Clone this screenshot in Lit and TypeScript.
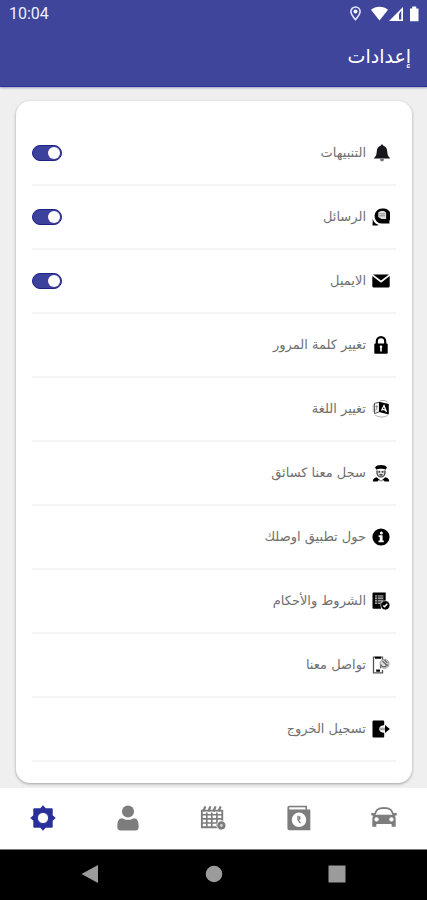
import { LitElement, html, svg, css } from "lit";
import { customElement, property, state } from "lit/decorators.js";

const icons: Record<string, unknown> = {
  bell: svg`<path d="M10 .5a1.300 1.300 0 0 0-1.300 1.300C6 2.500 5 4.500 4.800 7 4.600 10.500 4.200 12 2.200 13.700v.9h15.600v-.9c-2-1.700-2.400-3.200-2.600-6.700C15 4.500 14 2.500 11.300 1.800A1.300 1.300 0 0 0 10 .5z" fill="#17181b"/><path d="M8 15h4a2 2.500 0 0 1-4 0z" fill="#777"/>`,
  chat: svg`<path d="M10 .6a7.500 7.500 0 1 0 0 15h7.400v-3A7.500 7.500 0 0 0 10 .6z"/><path d="M6.300 4.600a5 5 0 0 1 7.800 0V11H9.500l-3.200-2z" fill="#ddd"/><path d="M7.500 5.800H13M7.500 7.800H13" stroke="#888" stroke-width="1"/><path d="M.8 9c0 3.500 1 6 6 8l-1.500.4H.5z"/><path d="M1.800 10c1 4 3.500 6 7.200 6.600" fill="none" stroke="#fff" stroke-width=".9"/>`,
  mail: svg`<path d="M1 2.500h16L9 8.600z"/><path d="M.3 4 9 10.700 17.700 4v10a1.500 1.500 0 0 1-1.500 1.500H1.800A1.500 1.500 0 0 1 .3 14z"/>`,
  lock: svg`<path d="M4.800 8V5.300a4.200 4.200 0 0 1 8.400 0V8" fill="none" stroke="#000" stroke-width="2.200"/><rect x="2.300" y="7.500" width="13.400" height="10.200" rx="1"/><path d="M9 10.500v5" stroke="#fff" stroke-width="1.600"/><circle cx="9" cy="10.800" r="1.300" fill="#fff"/>`,
  language: svg`<path d="M7 1.800 16.800 4v10.500L7 12z"/><path d="m9.500 10.500 2.500-5L14.500 12M10.500 9.300l3 .8" fill="none" stroke="#fff" stroke-width="1.300"/><path d="M7 2.300 2.500 3.300v10.200L7 12" fill="#eee" stroke="#444" stroke-width=".9"/><path d="M3.500 6.500h2.500M4.700 5.500v3l-1 2" fill="none" stroke="#777" stroke-width=".8"/><path d="M8 1c3-1 5.500-.7 7.500 1M3 14.800c3 2.700 9 2.900 12.500.6M1.200 4v8" fill="none" stroke="#999" stroke-width=".8"/>`,
  driver: svg`<path d="M3 3.500C4.500.2 13.500.2 15 3.500l-1.500 2.300C11.500 4.500 6.500 4.500 4.500 5.800z"/><path d="M5 6.500v2a4 4.500 0 0 0 8 0v-2" fill="#ddd" stroke="#333" stroke-width="1.200"/><path d="M6.500 7.800h1.700M9.800 7.800h1.700M7.500 10.800h3" stroke="#111" stroke-width="1.200"/><path d="M.8 17.500c0-2.600 1.300-3.500 4-4.200L9 17l4.200-3.700c2.700.7 4 1.600 4 4.200h-4.400L11 16l-2 1.500L7 16l-1.800 1.500z"/>`,
  info: svg`<circle cx="9" cy="9" r="8.600"/><circle cx="9.400" cy="4.900" r="1.500" fill="#fff"/><path d="M6.600 7.200h4v5.300h1.200v1.800H6.500v-1.800h1.300V9H6.600z" fill="#fff"/>`,
  terms: svg`<path d="M1.500.6h12.200v8.600L9 12v4.700H1.500a1 1 0 0 1-1-1V1.600a1 1 0 0 1 1-1z"/><path d="M3 3.300h8.300v6L8 12H3z" fill="#999"/><path d="M3 5h8M3 7.500h8M3 10h6M5.500 3v9" stroke="#222" stroke-width=".9"/><circle cx="13.300" cy="13.300" r="4.600" stroke="#fff" stroke-width=".6"/><path d="m11.300 13.500 1.300 1.200 2.700-2.900" fill="none" stroke="#fff" stroke-width="1.500"/>`,
  contact: svg`<path d="M10.500 4V1.200H1.500v15.600h9V14" fill="none" stroke="#555" stroke-width="1.300"/><path d="M3 .8h6v1.900H3zM4.200 15.800h3.800v-2.300H4.200z"/><circle cx="12.500" cy="7.800" r="4.500" fill="#ddd" stroke="#888" stroke-width=".8"/><path d="M8.500 12.300 9 9c2 2.600 4 2.500 7-.5M10.500 5l4 4M12.500 4l3 3" fill="none" stroke="#666" stroke-width="1.200"/>`,
  logout: svg`<path d="M1.500.6h9.700a1 1 0 0 1 1 1v3.700c-3 0-5 1.500-5 3.700s2 3.700 5 3.700v3.700a1 1 0 0 1-1 1H1.500a1 1 0 0 1-1-1V1.600a1 1 0 0 1 1-1z"/><path d="M7.800 9H13" stroke="#aaa" stroke-width="2.800"/><path d="M13 5 17.800 9 13 13z"/>`,
};

const tabIcons: Record<string, unknown> = {
  car: svg`<path d="M4 10.500C5.500 5.500 7 3.200 14 3.200S22.500 5.500 24 10.500" fill="none" stroke="currentColor" stroke-width="2"/><path d="M.3 8.500h3.500l.6 2h19.200l.6-2h3.500V11l-2 .5c.8 1.600.9 3 .9 5.300v6.700h-4.400V20.500H5.800v3H1.400v-6.700c0-2.300.1-3.700.9-5.300l-2-.5z"/><circle cx="6" cy="15.500" r="2.300" fill="#fff"/><circle cx="22" cy="15.500" r="2.300" fill="#fff"/>`,
  book: svg`<path d="M1.500 3A2.200 2.200 0 0 1 3.700.8h19v4h3.500v22.400H3.700A2.200 2.200 0 0 1 1.500 25z"/><path d="M3.500 2.500h17.500v2.300H3.500z" fill="#fff"/><circle cx="14" cy="16" r="7.800" fill="#fff"/><path d="M13 11.500v4.500l2.500 3.500M14.700 12v4" fill="none" stroke="currentColor" stroke-width="1.500"/>`,
  calendar: svg`<path d="M2 6h22v18H2z" fill="#fff" stroke="currentColor" stroke-width="2"/><path d="M2 10.500H24M2 15H24M2 19.400H24M7.300 8v16M12.700 8v16M18.200 8v16" fill="none" stroke="currentColor" stroke-width="1.800"/><path d="M3.500 7l2.200-5.500M9 7l2.200-5.500M14.500 7l2.200-5.500M20 7l2.200-5.500" stroke="currentColor" stroke-width="2.400"/><circle cx="23" cy="22" r="5" stroke="#fff"/><circle cx="23" cy="22" r="1.600" fill="#ccc"/>`,
  person: svg`<circle cx="14" cy="7" r="6.500"/><path d="M2.500 23c0-5 1.300-8.700 5.200-8.700 4 2.200 8.600 2.200 12.600 0 3.900 0 5.200 3.700 5.200 8.700 0 3.200-1 4.500-3.500 4.500H6C3.500 27.500 2.500 26.200 2.500 23z"/>`,
  gear: svg`<path fill-rule="evenodd" d="M14 .8l3 3.300h6.900V11l3.300 3-3.300 3v6.900H17l-3 3.300-3-3.300H4.100V17L.8 14l3.300-3V4.100H11zM14 8a6 6 0 1 0 0 12 6 6 0 0 0 0-12z" stroke="currentColor" stroke-linejoin="round"/>`,
};

interface Item {
  icon: string;
  label: string;
  toggle?: boolean;
}

const items: Item[] = [
  { icon: "bell", label: "التنبيهات", toggle: true },
  { icon: "chat", label: "الرسائل", toggle: true },
  { icon: "mail", label: "الايميل", toggle: true },
  { icon: "lock", label: "تغيير كلمة المرور" },
  { icon: "language", label: "تغيير اللغة" },
  { icon: "driver", label: "سجل معنا كسائق" },
  { icon: "info", label: "حول تطبيق اوصلك" },
  { icon: "terms", label: "الشروط والأحكام" },
  { icon: "contact", label: "تواصل معنا" },
  { icon: "logout", label: "تسجيل الخروج" },
];

const tabs = [
  { id: "car", label: "الرحلات" },
  { id: "book", label: "السجل" },
  { id: "calendar", label: "الحجوزات" },
  { id: "person", label: "الحساب" },
  { id: "gear", label: "إعدادات" },
];

@customElement("setting-row")
class SettingRow extends LitElement {
  @property({ attribute: false }) item!: Item;

  static styles = css`
    :host { display: block; }
    .row {
      display: flex; align-items: center; gap: 6px;
      box-sizing: border-box; width: 100%; height: 64px; padding: 0 6px 0 0;
      border: 0; border-bottom: 2px solid #f4f4f4; background: none;
      font: inherit; color: inherit; text-align: right; cursor: pointer;
    }
    .icon { width: 18px; height: 18px; flex: none; }
    .label { flex: 1; }
    .switch {
      appearance: none; display: flex; align-items: center; flex: none;
      box-sizing: border-box; width: 30px; height: 16px; margin: 0; padding: 0 1px;
      border-radius: 8px; background: #3c429c; border: 1px solid #20208c; cursor: pointer;
    }
    .switch::before { content: ""; width: 12px; height: 12px; border-radius: 50%; background: #fff; }
    .switch:not(:checked) { background: #aaa; border-color: #999; justify-content: flex-end; }
  `;

  render() {
    const body = html`
      <svg class="icon" viewBox="0 0 18 18" aria-hidden="true">${icons[this.item.icon]}</svg>
      <span class="label">${this.item.label}</span>`;
    return this.item.toggle
      ? html`<label class="row">${body}<input class="switch" type="checkbox" role="switch" dir="rtl" checked></label>`
      : html`<button class="row" type="button">${body}</button>`;
  }
}

@customElement("app-root")
class AppRoot extends LitElement {
  @state() private current = "gear";

  static styles = css`
    :host {
      display: flex; flex-direction: column; min-height: 100vh;
      background: #efefef; color: #707070; direction: rtl;
      font: 13px/20px "DejaVu Sans", sans-serif;
    }
    .header { background: #3f459b; color: #fff; border-bottom: 1px solid #2c3189; box-shadow: 0 1px 2px #9da0c8; }
    .status {
      display: flex; align-items: center; justify-content: space-between; direction: ltr;
      height: 28px; padding: 0 7px 0 9px; color: #eef;
      font: 16px/28px Roboto, sans-serif;
    }
    .signals { display: block; }
    .title { margin: 0; padding: 12px 16px 14px; font-size: 19px; line-height: 32px; font-weight: 400; }
    .content { flex: 1; padding: 14px 15px 5px 16px; }
    .card { padding: 21px 16px; background: #fff; border-radius: 14px; box-shadow: 0 1px 3px #0005; }
    .tabs { display: flex; height: 61px; background: #fff; }
    .tab {
      flex: 1; display: flex; align-items: center; justify-content: center;
      padding: 0 0 2px; border: 0; background: none; color: #7d7d7d; cursor: pointer;
    }
    .tab.active { color: #2a309a; }
    .tab svg { width: 26px; height: 26px; fill: currentColor; }
    .system { display: flex; direction: ltr; height: 50px; padding: 0 28px; background: #000; border-top: 1px solid #777; }
    .key { flex: 1; display: flex; align-items: center; justify-content: center; padding: 0 0 2px; border: 0; background: none; }
    .key svg { width: 18px; height: 18px; fill: #9b9b9b; }
  `;

  render() {
    return html`
      <header class="header">
        <div class="status">
          <span>10:04</span>
          <svg class="signals" width="70" height="18" viewBox="0 0 70 18" fill="#fff" aria-hidden="true">
            <path d="M5.500 2a4.600 4.600 0 0 1 4.600 4.600c0 3-4.600 8-4.600 8S.9 9.600.9 6.600A4.600 4.600 0 0 1 5.500 2z" fill="none" stroke="#e4e6ff" stroke-width="1.600"/>
            <circle cx="5.500" cy="6.500" r="2"/>
            <path d="M21 4.700c4.500-4 12.500-4 17 0L29.500 15.500z"/>
            <path d="M39 16 53 2v14z"/><path d="M49 9v5.500h2.300V5.500z" fill="#3f459b"/>
            <path d="M60 3.500h2.200V1.500h4v2h2.300v12.700H60z"/>
          </svg>
        </div>
        <h1 class="title">إعدادات</h1>
      </header>
      <main class="content">
        <section class="card">
          ${items.map((item) => html`<setting-row .item=${item}></setting-row>`)}
        </section>
      </main>
      <nav class="tabs">
        ${tabs.map((t) => html`
          <button class="tab ${t.id === this.current ? "active" : ""}" type="button"
            aria-label=${t.label} @click=${() => (this.current = t.id)}>
            <svg viewBox="0 0 28 28" aria-hidden="true">${tabIcons[t.id]}</svg>
          </button>`)}
      </nav>
      <div class="system">
        <button class="key" type="button" aria-label="رجوع"><svg viewBox="0 0 18 18"><path d="M.5 9 17 0v18z"/></svg></button>
        <button class="key" type="button" aria-label="الرئيسية"><svg viewBox="0 0 18 18"><circle cx="9" cy="9" r="8.300"/></svg></button>
        <button class="key" type="button" aria-label="التطبيقات"><svg viewBox="0 0 18 18"><path d="M.5.5h17v17H.5z"/></svg></button>
      </div>
    `;
  }
}
